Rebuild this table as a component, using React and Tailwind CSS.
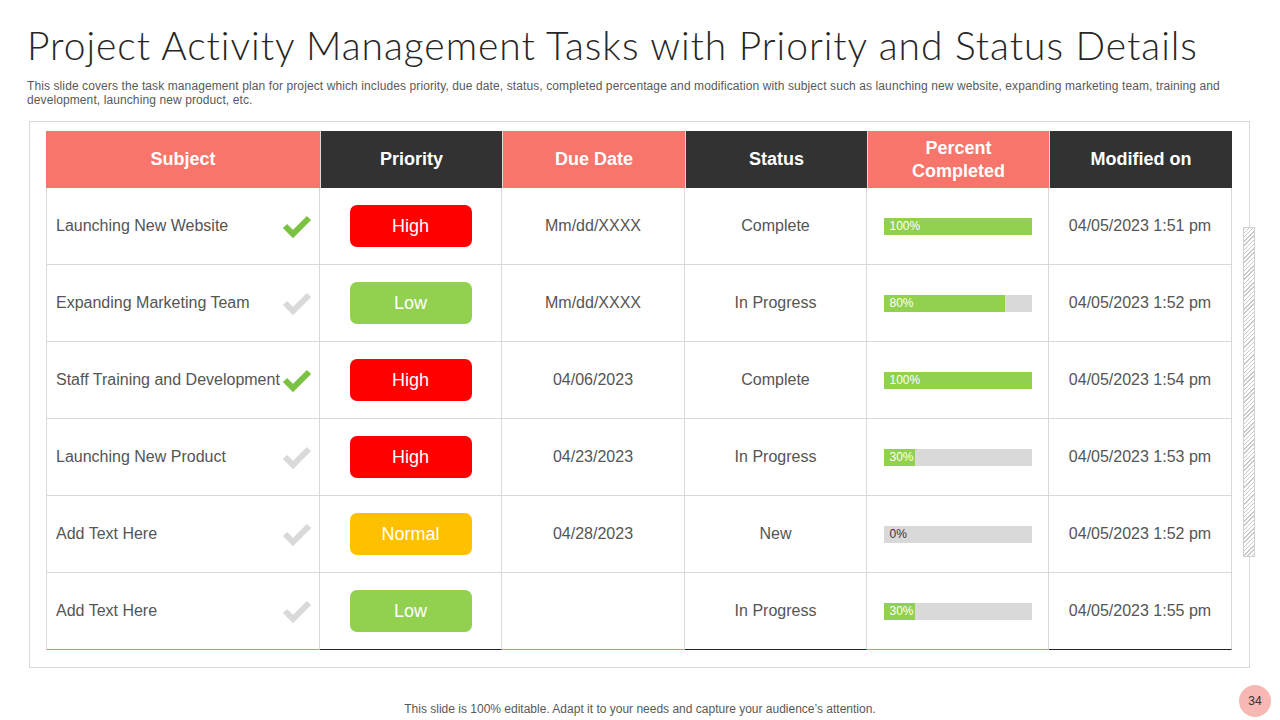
import React from "react";

const rows = [
  { subject: "Launching New Website", done: true, priority: "High", due: "Mm/dd/XXXX", status: "Complete", pct: 100, fill: 100, modified: "04/05/2023 1:51 pm" },
  { subject: "Expanding Marketing Team", done: false, priority: "Low", due: "Mm/dd/XXXX", status: "In Progress", pct: 80, fill: 82, modified: "04/05/2023 1:52 pm" },
  { subject: "Staff Training and Development", done: true, priority: "High", due: "04/06/2023", status: "Complete", pct: 100, fill: 100, modified: "04/05/2023 1:54 pm" },
  { subject: "Launching New Product", done: false, priority: "High", due: "04/23/2023", status: "In Progress", pct: 30, fill: 21, modified: "04/05/2023 1:53 pm" },
  { subject: "Add Text Here", done: false, priority: "Normal", due: "04/28/2023", status: "New", pct: 0, fill: 0, modified: "04/05/2023 1:52 pm" },
  { subject: "Add Text Here", done: false, priority: "Low", due: "", status: "In Progress", pct: 30, fill: 21, modified: "04/05/2023 1:55 pm" },
];

const badge = {
  High: "bg-[#ff0000]",
  Low: "bg-[#92d050]",
  Normal: "bg-[#ffc000]",
};

const Check = ({ done }) => (
  <svg width="30" height="24" viewBox="0 0 30 24" className="shrink-0">
    <polyline
      points="3,12 11,20 27,4"
      fill="none"
      stroke={done ? "#7cc242" : "#d9d9d9"}
      strokeWidth="6"
      strokeLinejoin="miter"
    />
  </svg>
);

const Progress = ({ pct, fill }) => (
  <div className="relative w-[148px] h-[17px] bg-[#d9d9d9]">
    <div className="h-full bg-[#92d050]" style={{ width: `${fill}%` }} />
    <span
      className={`absolute left-[6px] top-0 leading-[17px] text-[12px] ${pct > 0 ? "text-white" : "text-[#333]"}`}
    >
      {pct}%
    </span>
  </div>
);

const headCls = "flex items-center justify-center text-center text-white font-bold text-[18px] leading-[23px]";
const cellCls = "flex items-center border-r border-b border-[#d9d9d9] text-[16px] text-[#555]";

export default function App() {
  return (
    <div className="relative w-[1280px] h-[720px] bg-white overflow-hidden font-['Liberation_Sans',Arial,sans-serif]">
      <h1 className="pl-[27px] pt-[24px] text-[39px] leading-[42px] text-[#262626] font-['Lato','Liberation_Sans',sans-serif] font-light tracking-[0.95px]">
        Project Activity Management Tasks with Priority and Status Details
      </h1>
      <p className="pl-[27px] mt-[13px] text-[12px] leading-[14px] text-[#595959] tracking-[0.1px]">
        This slide covers the task management plan for project which includes priority, due date, status, completed percentage and modification with subject such as launching new website, expanding marketing team, training and
        <br />
        development, launching new product, etc.
      </p>

      <div className="ml-[29px] mt-[14px] w-[1221px] h-[547px] border border-[#d9d9d9] pl-[16px] pt-[9px]">
        <div className="grid grid-cols-[274px_182px_183px_182px_182px_183px] grid-rows-[57px_repeat(6,77px)] w-[1186px]">
          <div className={`${headCls} bg-[#f8756b]`}>Subject</div>
          <div className={`${headCls} bg-[#323233] border-l border-[#d9d9d9]`}>Priority</div>
          <div className={`${headCls} bg-[#f8756b] border-l border-[#d9d9d9]`}>Due Date</div>
          <div className={`${headCls} bg-[#323233] border-l border-[#d9d9d9]`}>Status</div>
          <div className={`${headCls} bg-[#f8756b] border-l border-[#d9d9d9]`}>
            Percent
            <br />
            Completed
          </div>
          <div className={`${headCls} bg-[#323233] border-l border-[#d9d9d9]`}>Modified on</div>

          {rows.map((r, i) => {
            const last = i === rows.length - 1;
            const redB = last ? "border-b-[#f08080]" : "";
            const darkB = last ? "border-b-[#222]" : "";
            return (
              <React.Fragment key={i}>
                <div className={`${cellCls} ${redB} border-l justify-between pl-[9px] pr-[7px]`}>
                  <span>{r.subject}</span>
                  <Check done={r.done} />
                </div>
                <div className={`${cellCls} ${darkB} justify-center`}>
                  <div className={`w-[122px] h-[42px] rounded-[7px] flex items-center justify-center text-white text-[18px] ${badge[r.priority]}`}>
                    {r.priority}
                  </div>
                </div>
                <div className={`${cellCls} ${redB} justify-center`}>{r.due}</div>
                <div className={`${cellCls} ${darkB} justify-center`}>{r.status}</div>
                <div className={`${cellCls} ${redB} justify-center`}>
                  <Progress pct={r.pct} fill={r.fill} />
                </div>
                <div className={`${cellCls} ${darkB} justify-center`}>{r.modified}</div>
              </React.Fragment>
            );
          })}
        </div>
      </div>

      <div className="absolute left-[1243px] top-[227px] w-[12px] h-[330px] border border-[#d0d0d0] bg-[repeating-linear-gradient(135deg,#c8c8c8_0px,#c8c8c8_1px,#ffffff_1px,#ffffff_3px)]" />

      <p className="absolute left-0 right-0 top-[700px] text-center text-[12px] text-[#595959]">
        This slide is 100% editable. Adapt it to your needs and capture your audience’s attention.
      </p>

      <div className="absolute left-[1239px] top-[685px] w-[32px] h-[32px] rounded-full bg-[#f7b8b4] flex items-center justify-center text-[12px] text-[#333]">
        34
      </div>
    </div>
  );
}
